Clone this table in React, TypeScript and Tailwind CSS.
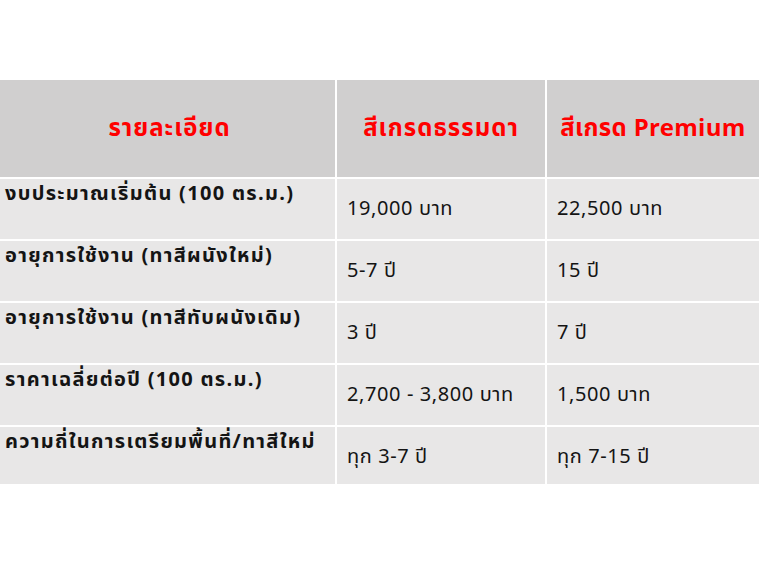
import React from 'react'

const rows = [
  ['งบประมาณเริ่มต้น (100 ตร.ม.)', '19,000 บาท', '22,500 บาท'],
  ['อายุการใช้งาน (ทาสีผนังใหม่)', '5-7 ปี', '15 ปี'],
  ['อายุการใช้งาน (ทาสีทับผนังเดิม)', '3 ปี', '7 ปี'],
  ['ราคาเฉลี่ยต่อปี (100 ตร.ม.)', '2,700 - 3,800 บาท', '1,500 บาท'],
  ['ความถี่ในการเตรียมพื้นที่/ทาสีใหม่', 'ทุก 3-7 ปี', 'ทุก 7-15 ปี'],
]

export default function App() {
  return (
    <div
      className="w-[759px] h-[569px] bg-white pt-[80px]"
      style={{ fontFamily: '"Noto Sans Thai", "Noto Sans", "Liberation Sans", sans-serif' }}
    >
      <div className="grid grid-cols-[335px_208px_1fr] gap-[2px] bg-white">
        {/* Header */}
        <div className="h-[97px] bg-[#d0cfcf] flex items-center justify-center pl-[4px] text-[24px] tracking-[1px] font-bold text-[#ff0000]">
          รายละเอียด
        </div>
        <div className="h-[97px] bg-[#d0cfcf] flex items-center justify-center text-[24px] tracking-[1px] font-bold text-[#ff0000]">
          สีเกรดธรรมดา
        </div>
        <div className="h-[97px] bg-[#d0cfcf] flex items-center justify-center text-[24px] tracking-[0.3px] font-bold text-[#ff0000]">
          สีเกรด Premium
        </div>

        {rows.map((r, i) => (
          <React.Fragment key={i}>
            <div className={`${i === 4 ? 'h-[57px]' : 'h-[60px]'} bg-[#e8e7e7] pl-[5px] text-[20px] tracking-[1.3px] font-bold text-[#141414] leading-[30px] whitespace-nowrap`}>
              {r[0]}
            </div>
            <div className={`${i === 4 ? 'h-[57px]' : 'h-[60px]'} bg-[#e8e7e7] pl-[10px] pt-[15px] text-[20px] tracking-[0.6px] text-[#141414] leading-[30px] whitespace-nowrap`}>
              {r[1]}
            </div>
            <div className={`${i === 4 ? 'h-[57px]' : 'h-[60px]'} bg-[#e8e7e7] pl-[10px] pt-[15px] text-[20px] tracking-[0.6px] text-[#141414] leading-[30px] whitespace-nowrap`}>
              {r[2]}
            </div>
          </React.Fragment>
        ))}
      </div>
    </div>
  )
}
